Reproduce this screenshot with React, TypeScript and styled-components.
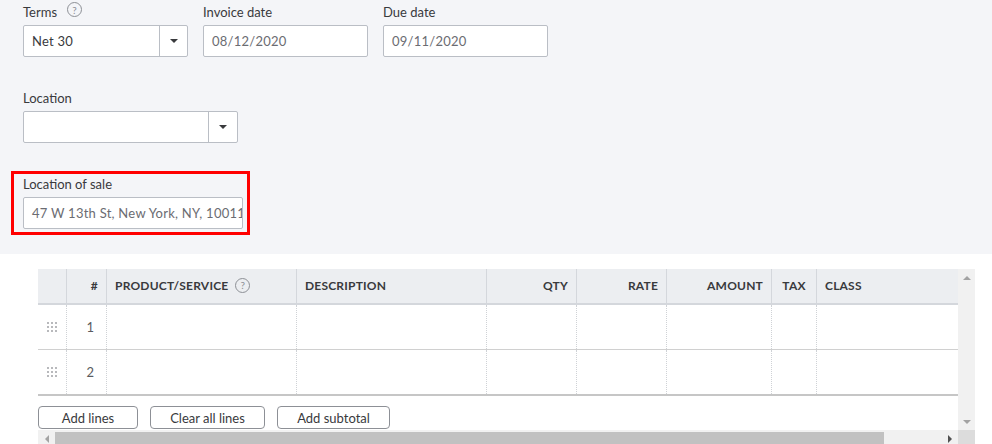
import React from "react";
import styled, { createGlobalStyle } from "styled-components";

const GlobalStyle = createGlobalStyle`
  html, body {
    margin: 0;
    padding: 0;
    height: 100%;
    overflow: hidden;
    background: #ffffff;
  }
  body {
    font-family: Lato, "Noto Sans", "Liberation Sans", sans-serif;
    color: #393a3d;
  }
  * { box-sizing: border-box; }
`;

const Page = styled.div`
  width: 992px;
  height: 444px;
  display: flex;
  flex-direction: column;
`;

const FormArea = styled.section`
  background: #f4f5f8;
  height: 254px;
  flex: none;
  padding: 4px 0 0 23px;
  display: flex;
  flex-direction: column;
  align-items: flex-start;
`;

const FieldRow = styled.div<{ $mt?: number }>`
  display: flex;
  gap: 15px;
  margin-top: ${(p) => p.$mt ?? 0}px;
`;

const Field = styled.div<{ $w: number }>`
  width: ${(p) => p.$w}px;
  display: flex;
  flex-direction: column;
`;

const Label = styled.div`
  display: flex;
  align-items: flex-start;
  gap: 10px;
  height: 16px;
  margin-bottom: 5px;
  font-size: 13px;
  line-height: 16px;
  color: #393a3d;
`;

const HelpIcon = styled.span<{ $size: number; $mt?: number }>`
  display: inline-flex;
  align-items: center;
  justify-content: center;
  width: ${(p) => p.$size}px;
  height: ${(p) => p.$size}px;
  margin-top: ${(p) => p.$mt ?? 0}px;
  border: 1px solid #8d9096;
  border-radius: 50%;
  font-size: 10px;
  font-weight: 400;
  line-height: 1;
  color: #8d9096;
  flex: none;
`;

const TextBox = styled.div<{ $dim?: boolean }>`
  height: 32px;
  border: 1px solid #babec5;
  border-radius: 2px;
  background: #ffffff;
  padding: 0 8px 1px;
  display: flex;
  align-items: center;
  font-size: 13px;
  letter-spacing: 0.25px;
  white-space: nowrap;
  overflow: hidden;
  color: ${(p) => (p.$dim ? "#6b6c72" : "#393a3d")};
`;

const SelectBox = styled.div`
  height: 32px;
  border: 1px solid #babec5;
  border-radius: 2px;
  background: #ffffff;
  display: flex;
`;

const SelectValue = styled.div`
  flex: 1;
  padding: 0 8px 1px;
  display: flex;
  align-items: center;
  font-size: 13px;
  letter-spacing: 0.25px;
  color: #393a3d;
`;

const SelectToggle = styled.div<{ $w: number }>`
  width: ${(p) => p.$w}px;
  flex: none;
  border-left: 1px solid #babec5;
  display: flex;
  align-items: center;
  justify-content: center;
`;

const Caret = styled.span`
  width: 0;
  height: 0;
  border-left: 4px solid transparent;
  border-right: 4px solid transparent;
  border-top: 4px solid #393a3d;
`;

const Highlight = styled.div`
  margin: 28px 0 0 -12px;
  width: 239px;
  border: 3px solid #ff0000;
  padding: 2px 4px 3px 9px;
  display: flex;
  flex-direction: column;
`;

/* ---------- table / scroll frame ---------- */

const COLS = "29px 40px 190px 190px 90px 90px 105px 45px 141px";

const ScrollFrame = styled.div`
  margin: 15px 0 0 38px;
  display: grid;
  grid-template-columns: 920px 17px;
  grid-template-rows: 161px 17px;
  flex: none;
`;

const ScrollViewport = styled.div`
  overflow: hidden;
  background: #ffffff;
  display: flex;
  flex-direction: column;
`;

const HeadRow = styled.div`
  display: grid;
  grid-template-columns: ${COLS};
  background: #eceef1;
  border-bottom: 2px solid #d4d7dc;
`;

const HeadCell = styled.div<{ $align?: "left" | "right" | "center" }>`
  height: 34px;
  padding: 0 8px 2px;
  display: flex;
  align-items: center;
  gap: 7px;
  justify-content: ${(p) =>
    p.$align === "right" ? "flex-end" : p.$align === "center" ? "center" : "flex-start"};
  border-right: 1px solid #d4d7dc;
  font-size: 12px;
  font-weight: 700;
  letter-spacing: 0.2px;
  text-transform: uppercase;
  color: #393a3d;
  white-space: nowrap;
  &:last-child { border-right: none; }
`;

const BodyRow = styled.div<{ $last?: boolean }>`
  display: grid;
  grid-template-columns: ${COLS};
  height: ${(p) => (p.$last ? 46 : 45)}px;
  border-bottom: ${(p) => (p.$last ? "2px solid #c6c6c6" : "1px solid #d0d0d0")};
`;

const BodyCell = styled.div<{ $align?: "right" | "center" }>`
  display: flex;
  align-items: center;
  justify-content: ${(p) =>
    p.$align === "right" ? "flex-end" : p.$align === "center" ? "center" : "flex-start"};
  padding: 0 ${(p) => (p.$align === "right" ? 12 : 8)}px 0 0;
  border-right: 1px dotted #cfd2d6;
  font-size: 13px;
  color: #5a5b60;
  &:last-child { border-right: none; }
`;

const HandleCell = styled(BodyCell)`
  padding: 0;
  justify-content: center;
`;

const ButtonRow = styled.div`
  display: flex;
  gap: 12px;
  margin-top: 10px;
`;

const Button = styled.button<{ $w: number }>`
  width: ${(p) => p.$w}px;
  height: 23px;
  padding: 0;
  border: 1px solid #8d9096;
  border-radius: 4px;
  background: #ffffff;
  font-family: Lato, "Noto Sans", "Liberation Sans", sans-serif;
  font-size: 13px;
  color: #393a3d;
  display: flex;
  align-items: center;
  justify-content: center;
`;

const VBar = styled.div`
  background: #f1f1f1;
  display: flex;
  flex-direction: column;
  justify-content: space-between;
`;

const HBar = styled.div`
  background: #f1f1f1;
  display: flex;
`;

const Corner = styled.div`
  background: #dcdcdc;
`;

const ArrowButton = styled.div`
  width: 17px;
  height: 17px;
  flex: none;
  display: flex;
  align-items: center;
  justify-content: center;
`;

const Arrow = styled.span<{ $dir: "up" | "down" | "left" | "right"; $color: string }>`
  width: 0;
  height: 0;
  ${(p) =>
    p.$dir === "up"
      ? `border-left: 4px solid transparent; border-right: 4px solid transparent; border-bottom: 4px solid ${p.$color};`
      : p.$dir === "down"
      ? `border-left: 4px solid transparent; border-right: 4px solid transparent; border-top: 4px solid ${p.$color};`
      : p.$dir === "left"
      ? `border-top: 4px solid transparent; border-bottom: 4px solid transparent; border-right: 4px solid ${p.$color};`
      : `border-top: 4px solid transparent; border-bottom: 4px solid transparent; border-left: 4px solid ${p.$color};`}
`;

const Track = styled.div`
  flex: 1;
  padding-top: 2px;
`;

const Thumb = styled.div<{ $w: number }>`
  width: ${(p) => p.$w}px;
  height: 13px;
  background: #c1c1c1;
`;

const DragDots = () => (
  <svg width="10" height="10" viewBox="0 0 10 10">
    {[0, 4, 8].map((y) =>
      [0, 4, 8].map((x) => (
        <rect key={`${x}-${y}`} x={x} y={y} width="2" height="2" fill="#b8b9bc" />
      ))
    )}
  </svg>
);

const columns: { label: string; align?: "left" | "right" | "center"; help?: boolean }[] = [
  { label: "" },
  { label: "#", align: "right" },
  { label: "Product/Service", help: true },
  { label: "Description" },
  { label: "Qty", align: "right" },
  { label: "Rate", align: "right" },
  { label: "Amount", align: "right" },
  { label: "Tax", align: "center" },
  { label: "Class" },
];

const rows = [1, 2];

export default function App() {
  return (
    <Page>
      <GlobalStyle />
      <FormArea>
        <FieldRow>
          <Field $w={165}>
            <Label>
              Terms
              <HelpIcon $size={15} $mt={-2}>?</HelpIcon>
            </Label>
            <SelectBox>
              <SelectValue>Net 30</SelectValue>
              <SelectToggle $w={28}>
                <Caret />
              </SelectToggle>
            </SelectBox>
          </Field>
          <Field $w={165}>
            <Label>Invoice date</Label>
            <TextBox $dim>08/12/2020</TextBox>
          </Field>
          <Field $w={165}>
            <Label>Due date</Label>
            <TextBox $dim>09/11/2020</TextBox>
          </Field>
        </FieldRow>

        <FieldRow $mt={33}>
          <Field $w={215}>
            <Label>Location</Label>
            <SelectBox>
              <SelectValue />
              <SelectToggle $w={29}>
                <Caret />
              </SelectToggle>
            </SelectBox>
          </Field>
        </FieldRow>

        <Highlight>
          <Label>Location of sale</Label>
          <TextBox $dim>47 W 13th St, New York, NY, 10011</TextBox>
        </Highlight>
      </FormArea>

      <ScrollFrame>
        <ScrollViewport>
          <HeadRow>
            {columns.map((c, i) => (
              <HeadCell key={i} $align={c.align}>
                {c.label}
                {c.help && <HelpIcon $size={15}>?</HelpIcon>}
              </HeadCell>
            ))}
          </HeadRow>
          {rows.map((n, idx) => (
            <BodyRow key={n} $last={idx === rows.length - 1}>
              <HandleCell>
                <DragDots />
              </HandleCell>
              <BodyCell $align="right">{n}</BodyCell>
              {columns.slice(2).map((_, i) => (
                <BodyCell key={i} />
              ))}
            </BodyRow>
          ))}
          <ButtonRow>
            <Button $w={100}>Add lines</Button>
            <Button $w={115}>Clear all lines</Button>
            <Button $w={113}>Add subtotal</Button>
          </ButtonRow>
        </ScrollViewport>

        <VBar>
          <ArrowButton>
            <Arrow $dir="up" $color="#a3a3a3" />
          </ArrowButton>
          <ArrowButton>
            <Arrow $dir="down" $color="#a3a3a3" />
          </ArrowButton>
        </VBar>

        <HBar>
          <ArrowButton>
            <Arrow $dir="left" $color="#a3a3a3" />
          </ArrowButton>
          <Track>
            <Thumb $w={829} />
          </Track>
          <ArrowButton>
            <Arrow $dir="right" $color="#505050" />
          </ArrowButton>
        </HBar>
        <Corner />
      </ScrollFrame>
    </Page>
  );
}
